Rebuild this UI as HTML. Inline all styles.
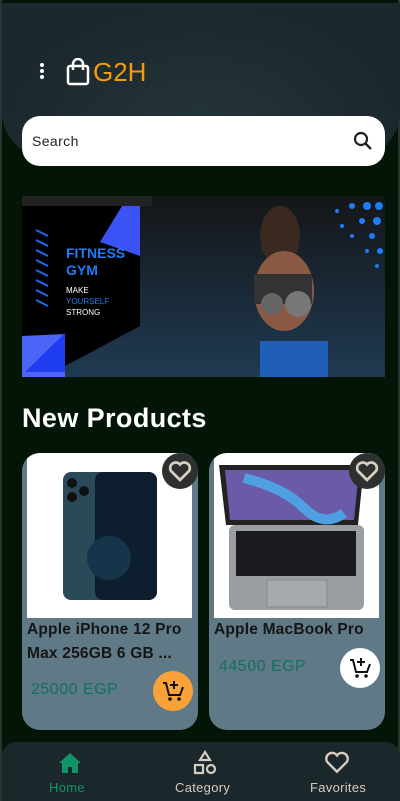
<!DOCTYPE html>
<html><head><meta charset="utf-8"><style>
*{margin:0;padding:0;box-sizing:border-box}
body{width:400px;height:801px;overflow:hidden;background:#021506;font-family:"Liberation Sans",sans-serif;position:relative}
.edge{position:absolute;top:0;bottom:0;width:2px;background:#2a3530}
.hdr{position:absolute;left:2px;top:3px;width:398px;height:160px;background:radial-gradient(ellipse at 50% 80%,#24353a,#1b282d 70%);border-radius:0 0 60px 60px/0 0 50px 50px}
.search{position:absolute;left:22px;top:116px;width:363px;height:50px;background:#fff;border-radius:18px}
.search span{position:absolute;left:10px;top:17px;font-size:14px;color:#222;letter-spacing:0.4px}
.card{position:absolute;top:453px;width:176px;height:277px;background:#5f7a86;border-radius:18px;overflow:hidden}
.img{position:absolute;left:5px;top:0;width:165px;height:165px;background:#fff}
.heart{position:absolute;top:0;right:0;width:36px;height:36px;border-radius:50%;background:#2e2f2f}
.t{position:absolute;left:5px;font-weight:bold;font-size:15.5px;color:#151515;line-height:24px;letter-spacing:0.2px;white-space:nowrap}
.p{position:absolute;font-size:16px;color:#137060;letter-spacing:0.5px}
.cart{position:absolute;width:40px;height:40px;border-radius:50%}
.nav{position:absolute;left:2px;top:742px;width:398px;height:59px;background:#1a272b;border-radius:14px 14px 0 0}
.nav div{position:absolute;top:38px;font-size:13px;color:#d6ccbf;letter-spacing:0.3px}
</style></head><body>
<div class="edge" style="left:0"></div><div class="edge" style="right:0"></div>
<div class="hdr"></div>
<svg style="position:absolute;left:36px;top:62px" width="12" height="18"><circle cx="6" cy="3" r="2" fill="#fff"/><circle cx="6" cy="9" r="2" fill="#fff"/><circle cx="6" cy="15" r="2" fill="#fff"/></svg>
<svg style="position:absolute;left:66px;top:58px" width="24" height="28" viewBox="0 0 24 28"><rect x="2" y="8" width="20" height="18" rx="2" fill="none" stroke="#fff" stroke-width="2.5"/><path d="M7 12V6a5 5 0 0 1 10 0v6" fill="none" stroke="#fff" stroke-width="2.5"/></svg>
<div style="position:absolute;left:93px;top:57px;font-size:26px;color:#f59a0c">G2H</div>
<div class="search"><span>Search</span>
<svg style="position:absolute;right:12px;top:15px" width="20" height="20" viewBox="0 0 20 20"><circle cx="8" cy="8" r="6" fill="none" stroke="#222" stroke-width="2.2"/><path d="M12.5 12.5L18 18" stroke="#222" stroke-width="2.4"/></svg></div>
<svg style="position:absolute;left:22px;top:196px" width="363" height="181" viewBox="0 0 363 181">
<defs><linearGradient id="g" x1="0" y1="0" x2="0" y2="1"><stop offset="0" stop-color="#141618"/><stop offset="1" stop-color="#1f3a52"/></linearGradient></defs>
<rect width="363" height="181" fill="url(#g)"/>
<rect width="130" height="10" fill="#222"/>
<polygon points="0,10 118,10 118,130 43,170 0,150" fill="#000"/>
<polygon points="100,10 118,10 118,60 78,46" fill="#3b52f5"/>
<polygon points="0,140 0,181 43,181 43,138" fill="#4d64f9"/>
<polygon points="43,137 43,176 3,176" fill="#1e3cf0"/>
<g stroke="#1e6cf0" stroke-width="2"><path d="M14 34l12 6M14 44l12 6M14 54l12 6M14 64l12 6M14 74l12 6M14 84l12 6M14 94l12 6M14 104l12 6"/></g>
<text x="44" y="62" font-size="14" font-weight="bold" fill="#1e7cf5" font-family="Liberation Sans">FITNESS</text>
<text x="44" y="79" font-size="14" font-weight="bold" fill="#1e7cf5" font-family="Liberation Sans">GYM</text>
<text x="44" y="97" font-size="8" fill="#fff" font-family="Liberation Sans">MAKE</text>
<text x="44" y="108" font-size="8" fill="#1e7cf5" font-family="Liberation Sans">YOURSELF</text>
<text x="44" y="119" font-size="8" fill="#fff" font-family="Liberation Sans">STRONG</text>
<ellipse cx="258" cy="40" rx="20" ry="30" fill="#3a2a22"/>
<ellipse cx="262" cy="95" rx="30" ry="40" fill="#8a5a44"/>
<rect x="232" y="78" width="58" height="30" fill="#333"/>
<rect x="238" y="145" width="68" height="36" fill="#1f5fb8"/>
<circle cx="276" cy="108" r="13" fill="#777"/><circle cx="250" cy="108" r="11" fill="#666"/>
<g fill="#1e7cf5"><circle cx="330" cy="10" r="3"/><circle cx="345" cy="10" r="4"/><circle cx="357" cy="10" r="4"/><circle cx="340" cy="25" r="3"/><circle cx="355" cy="25" r="4"/><circle cx="330" cy="40" r="2"/><circle cx="350" cy="40" r="3"/><circle cx="345" cy="55" r="2"/><circle cx="358" cy="55" r="3"/><circle cx="315" cy="15" r="2"/><circle cx="320" cy="30" r="2"/><circle cx="355" cy="70" r="2"/></g>
</svg>
<div style="position:absolute;left:22px;top:403px;font-size:27px;font-weight:bold;color:#fff;letter-spacing:0.4px">New Products</div>

<div class="card" style="left:22px">
<div class="img"><svg width="165" height="165" viewBox="0 0 165 165"><rect x="36" y="19" width="60" height="128" rx="8" fill="#2a4a5a"/><rect x="68" y="19" width="62" height="128" rx="8" fill="#0d1f2e"/><circle cx="82" cy="105" r="22" fill="#16344a"/><circle cx="45" cy="30" r="5" fill="#111"/><circle cx="57" cy="38" r="5" fill="#111"/><circle cx="45" cy="44" r="5" fill="#111"/></svg></div>
<div class="heart"><svg width="36" height="36" viewBox="0 0 24 24"><path d="M12 19l-6-6a3.7 3.7 0 0 1 6-4.3A3.7 3.7 0 0 1 18 13z" fill="none" stroke="#d8cfc2" stroke-width="1.8" transform="translate(0,-1)"/></svg></div>
<div class="t" style="top:165px">Apple iPhone 12 Pro<br>Max 256GB 6 GB ...</div>
<div class="p" style="left:9px;top:228px">25000 EGP</div>
<div class="cart" style="left:131px;top:218px;background:#f9a23a"><svg width="40" height="40" viewBox="0 0 40 40"><path d="M10 12h3l3 12h11l3-8" fill="none" stroke="#111" stroke-width="2"/><path d="M21 10v8M17 14h8" stroke="#111" stroke-width="2"/><circle cx="17" cy="28" r="1.8" fill="#111"/><circle cx="26" cy="28" r="1.8" fill="#111"/></svg></div>
</div>

<div class="card" style="left:209px">
<div class="img"><svg width="165" height="165" viewBox="0 0 165 165"><path d="M5 12h145l-6 60H12z" fill="#222"/><path d="M11 17h134l-5 50H16z" fill="#6a5aa8"/><path d="M30 25q40 10 60 30t40 5" stroke="#4fa0e0" stroke-width="10" fill="none"/><rect x="15" y="72" width="135" height="85" rx="6" fill="#9a9da2"/><rect x="22" y="78" width="120" height="45" fill="#1a1b1e"/><rect x="53" y="127" width="60" height="27" fill="#a6a9ae" stroke="#888"/></svg></div>
<div class="heart"><svg width="36" height="36" viewBox="0 0 24 24"><path d="M12 19l-6-6a3.7 3.7 0 0 1 6-4.3A3.7 3.7 0 0 1 18 13z" fill="none" stroke="#d8cfc2" stroke-width="1.8" transform="translate(0,-1)"/></svg></div>
<div class="t" style="top:165px">Apple MacBook Pro</div>
<div class="p" style="left:10px;top:205px">44500 EGP</div>
<div class="cart" style="left:131px;top:195px;background:#fff"><svg width="40" height="40" viewBox="0 0 40 40"><path d="M10 12h3l3 12h11l3-8" fill="none" stroke="#111" stroke-width="2"/><path d="M21 10v8M17 14h8" stroke="#111" stroke-width="2"/><circle cx="17" cy="28" r="1.8" fill="#111"/><circle cx="26" cy="28" r="1.8" fill="#111"/></svg></div>
</div>

<div class="nav">
<svg style="position:absolute;left:56px;top:10px" width="24" height="22" viewBox="0 0 24 22"><path d="M12 1L1 11h3v10h6v-6h4v6h6V11h3z" fill="#139468"/></svg>
<div style="left:47px;color:#139468">Home</div>
<svg style="position:absolute;left:191px;top:8px" width="24" height="26" viewBox="0 0 24 26"><path d="M12 2l5 8H7z" fill="none" stroke="#d6ccbf" stroke-width="2.2"/><rect x="2" y="15" width="8" height="8" fill="none" stroke="#d6ccbf" stroke-width="2.2"/><circle cx="18" cy="19" r="4" fill="none" stroke="#d6ccbf" stroke-width="2.2"/></svg>
<div style="left:173px">Category</div>
<svg style="position:absolute;left:322px;top:8px" width="26" height="24" viewBox="0 0 24 22"><path d="M12 20L3 11a5 5 0 0 1 9-6 5 5 0 0 1 9 6z" fill="none" stroke="#d6ccbf" stroke-width="2.2"/></svg>
<div style="left:308px">Favorites</div>
</div>
</body></html>
